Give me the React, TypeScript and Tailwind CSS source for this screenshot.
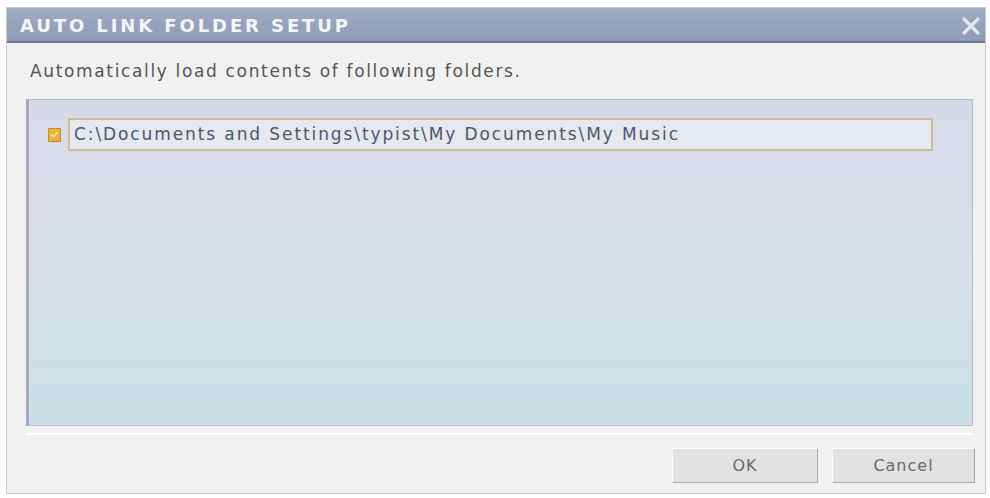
import React, { useState } from 'react';

const font = { fontFamily: '"DejaVu Sans", Verdana, sans-serif' };

export default function App() {
  const [checked, setChecked] = useState(true);

  return (
    <div className="w-[990px] h-[498px] bg-white pt-[7px] pl-[6px] pr-[4px] pb-[4px]" style={font}>
      <div className="h-full flex flex-col border border-[#c4c8d0] bg-[#f1f1f1]">
        {/* Title bar */}
        <div className="h-[35px] shrink-0 flex items-center justify-between pl-[13px] pr-[1px] pt-[2px] bg-gradient-to-b from-[#a0abc4] to-[#8e9bb7] border-b-2 border-[#6f7891]">
          <span className="text-[#f4f5f8] font-bold text-[18px] tracking-[2.9px]">AUTO LINK FOLDER SETUP</span>
          <button className="w-[26px] h-[26px] flex items-center justify-center text-[#e4e7ee]">
            <svg width="22" height="22" viewBox="0 0 22 22">
              <path d="M4 4 L18 18 M18 4 L4 18" stroke="currentColor" strokeWidth="3.2" strokeLinecap="round" />
            </svg>
          </button>
        </div>

        {/* Body */}
        <div className="flex-1 flex flex-col pl-[19px] pr-[12px]">
          <p className="h-[56px] pt-[18px] pl-[4px] text-[17px] leading-[20px] tracking-[1.65px] text-[#555555]">
            Automatically load contents of following folders.
          </p>

          <div className="h-[327px] border border-[#b8bcc8] border-l-[3px] border-l-[#a8a8c0] bg-gradient-to-b from-[#d6dbe7] via-[#d8dee8] to-[#cbe0e6] pt-[18px] pl-[19px] pr-[39px]">
            <div className="flex items-center gap-[7px]">
              <button
                onClick={() => setChecked(!checked)}
                className="w-[13px] h-[14px] shrink-0 border border-[#c0902a] bg-[#e9b63a] flex items-center justify-center"
              >
                {checked && (
                  <svg width="9" height="9" viewBox="0 0 9 9">
                    <path d="M1.5 4.5 L3.8 6.8 L7.5 2" stroke="#f7e9b0" strokeWidth="1.4" fill="none" />
                  </svg>
                )}
              </button>
              <div className="flex-1 h-[33px] flex items-center pl-[4px] border-2 border-[#cbbf92] bg-[#e6e8f0] text-[17px] tracking-[1.9px] text-[#4d566d]">
                C:\Documents and Settings\typist\My Documents\My Music
              </div>
            </div>
          </div>

          <div className="mt-[7px] border-t-2 border-white" />

          <div className="flex justify-end gap-[14px] pt-[13px] -mr-[2px]">
            <button className="w-[146px] h-[35px] bg-[#e2e2e2] border border-[#a8a8a8] border-t-[#fbfbfb] border-l-[#fbfbfb] text-[16px] tracking-[1px] text-[#6a6a6a]">
              OK
            </button>
            <button className="w-[143px] h-[35px] bg-[#e2e2e2] border border-[#a8a8a8] border-t-[#fbfbfb] border-l-[#fbfbfb] text-[16px] tracking-[1px] text-[#6a6a6a]">
              Cancel
            </button>
          </div>
        </div>
      </div>
    </div>
  );
}
